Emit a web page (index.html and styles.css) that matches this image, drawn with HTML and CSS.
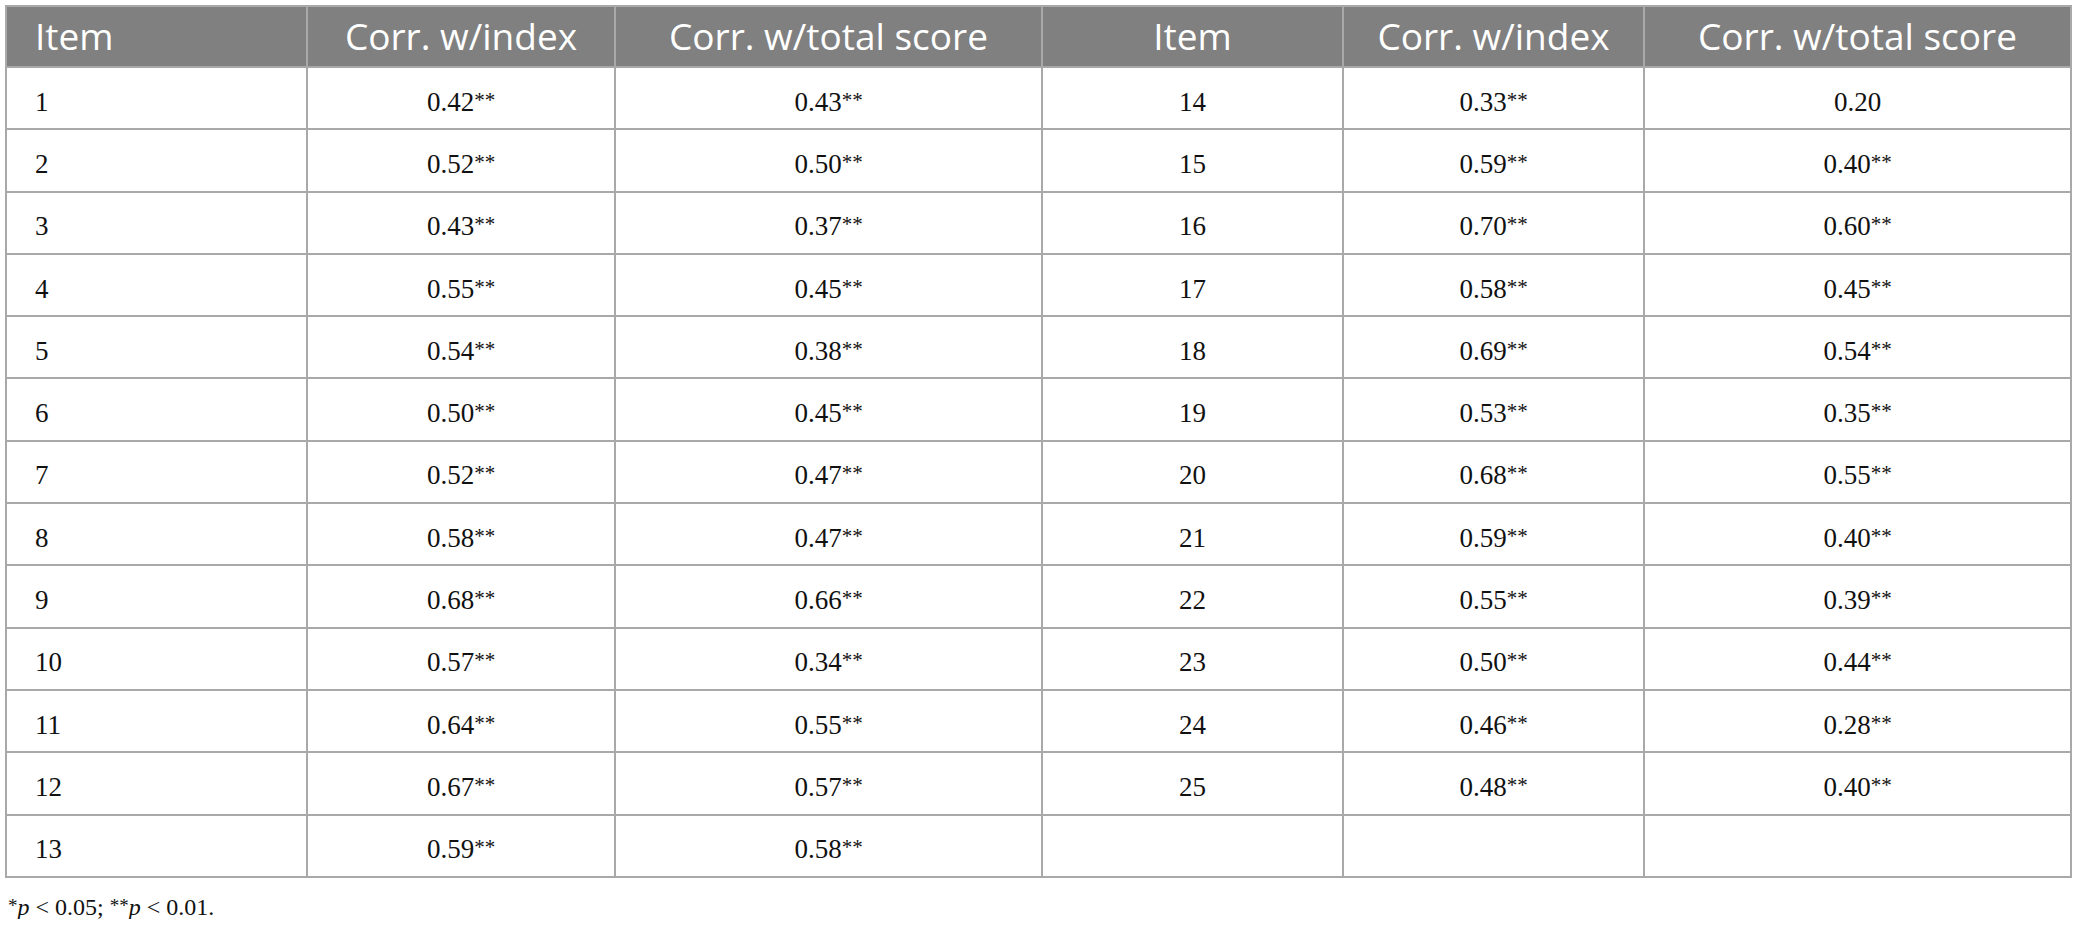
FILE: index.html
```html
<!DOCTYPE html>
<html>
<head>
<meta charset="utf-8">
<link rel="stylesheet" href="styles.css">
</head>
<body>
<div class="wrap">
<table class="corr">
<colgroup>
<col class="c-item"><col class="c-idx"><col class="c-tot"><col class="c-item"><col class="c-idx2"><col class="c-tot">
</colgroup>
<thead>
<tr><th class="left">Item</th><th>Corr. w/index</th><th>Corr. w/total score</th><th>Item</th><th>Corr. w/index</th><th>Corr. w/total score</th></tr>
</thead>
<tbody>
<tr><td class="left">1</td><td>0.42<sup>**</sup></td><td>0.43<sup>**</sup></td><td>14</td><td>0.33<sup>**</sup></td><td>0.20</td></tr>
<tr><td class="left">2</td><td>0.52<sup>**</sup></td><td>0.50<sup>**</sup></td><td>15</td><td>0.59<sup>**</sup></td><td>0.40<sup>**</sup></td></tr>
<tr><td class="left">3</td><td>0.43<sup>**</sup></td><td>0.37<sup>**</sup></td><td>16</td><td>0.70<sup>**</sup></td><td>0.60<sup>**</sup></td></tr>
<tr><td class="left">4</td><td>0.55<sup>**</sup></td><td>0.45<sup>**</sup></td><td>17</td><td>0.58<sup>**</sup></td><td>0.45<sup>**</sup></td></tr>
<tr><td class="left">5</td><td>0.54<sup>**</sup></td><td>0.38<sup>**</sup></td><td>18</td><td>0.69<sup>**</sup></td><td>0.54<sup>**</sup></td></tr>
<tr><td class="left">6</td><td>0.50<sup>**</sup></td><td>0.45<sup>**</sup></td><td>19</td><td>0.53<sup>**</sup></td><td>0.35<sup>**</sup></td></tr>
<tr><td class="left">7</td><td>0.52<sup>**</sup></td><td>0.47<sup>**</sup></td><td>20</td><td>0.68<sup>**</sup></td><td>0.55<sup>**</sup></td></tr>
<tr><td class="left">8</td><td>0.58<sup>**</sup></td><td>0.47<sup>**</sup></td><td>21</td><td>0.59<sup>**</sup></td><td>0.40<sup>**</sup></td></tr>
<tr><td class="left">9</td><td>0.68<sup>**</sup></td><td>0.66<sup>**</sup></td><td>22</td><td>0.55<sup>**</sup></td><td>0.39<sup>**</sup></td></tr>
<tr><td class="left">10</td><td>0.57<sup>**</sup></td><td>0.34<sup>**</sup></td><td>23</td><td>0.50<sup>**</sup></td><td>0.44<sup>**</sup></td></tr>
<tr><td class="left">11</td><td>0.64<sup>**</sup></td><td>0.55<sup>**</sup></td><td>24</td><td>0.46<sup>**</sup></td><td>0.28<sup>**</sup></td></tr>
<tr><td class="left">12</td><td>0.67<sup>**</sup></td><td>0.57<sup>**</sup></td><td>25</td><td>0.48<sup>**</sup></td><td>0.40<sup>**</sup></td></tr>
<tr><td class="left">13</td><td>0.59<sup>**</sup></td><td>0.58<sup>**</sup></td><td></td><td></td><td></td></tr>
</tbody>
</table>
<p class="note"><sup>*</sup><i>p</i> &lt; 0.05; <sup>**</sup><i>p</i> &lt; 0.01.</p>
</div>
</body>
</html>
```
FILE: styles.css
```css
html, body {
  margin: 0;
  padding: 0;
  background: #ffffff;
}
.wrap {
  padding: 5px 0 0 5px;
}
.corr {
  border-collapse: collapse;
  table-layout: fixed;
  width: 2066px;
  border: 2px solid #a9a9a9;
}
.c-item { width: 301px; }
.c-idx { width: 308px; }
.c-idx2 { width: 301px; }
.c-tot { width: 427px; }
.corr th {
  background: #808080;
  color: #ffffff;
  font-family: "Open Sans", "Noto Sans", sans-serif;
  font-weight: 400;
  font-size: 37px;
  height: 61px;
  padding: 0 10px 2px;
  text-align: center;
  border: 2px solid #a9a9a9;
  line-height: 1;
  white-space: nowrap;
  box-sizing: border-box;
}
.corr td {
  font-family: "Liberation Serif", "Times New Roman", serif;
  font-size: 27px;
  color: #111111;
  height: 62.3px;
  padding: 8px 10px 0;
  text-align: center;
  border: 2px solid #a9a9a9;
  box-sizing: border-box;
  line-height: 1;
}
.corr .left {
  text-align: left;
  padding-left: 28px;
}
.corr sup {
  font-size: 21px;
  vertical-align: 4px;
  line-height: 0;
}
.note {
  margin: 17px 0 0 3px;
  font-family: "Liberation Serif", "Times New Roman", serif;
  font-size: 24px;
  color: #111111;
  line-height: 1;
}
.note sup {
  font-size: 19px;
  vertical-align: 3px;
  line-height: 0;
}
.note i {
  font-style: italic;
}
```
